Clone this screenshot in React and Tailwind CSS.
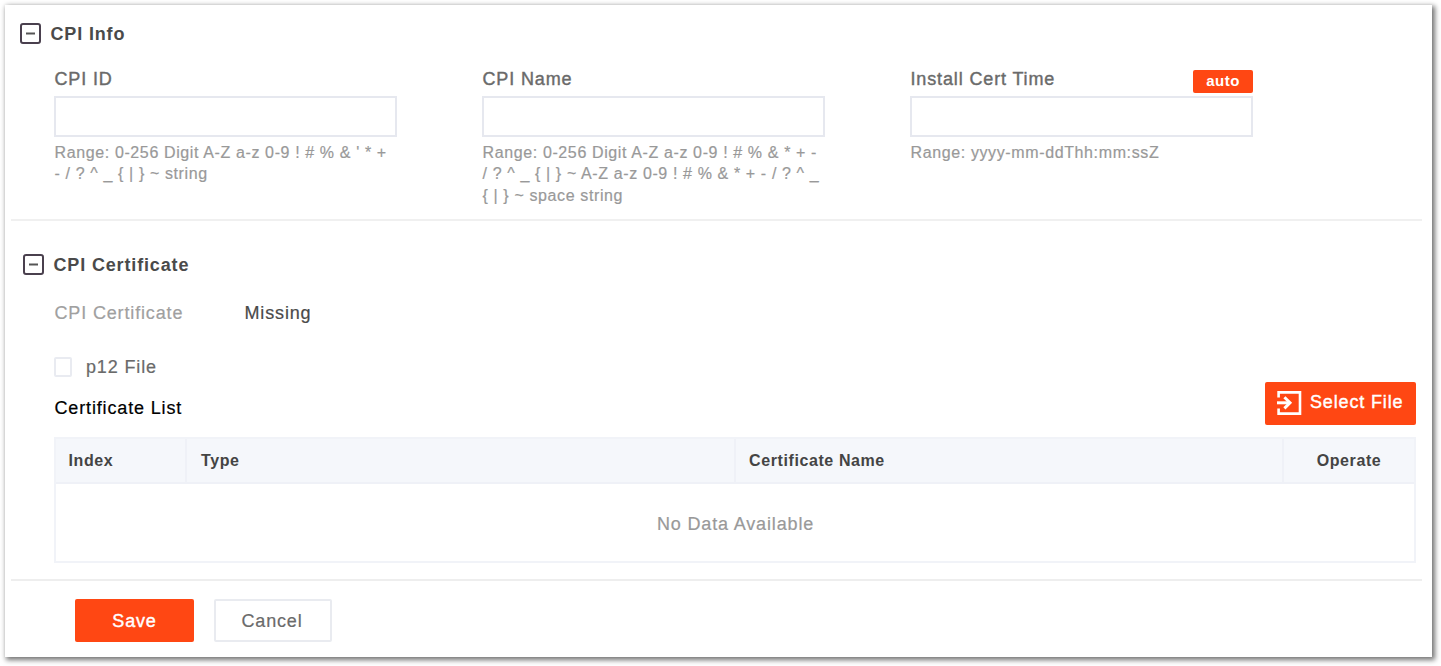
import React from "react";

function CollapseIcon() {
  return (
    <svg width="21" height="21" viewBox="0 0 21 21" fill="none" className="-mt-px">
      <rect x="1" y="1" width="19" height="19" rx="2" stroke="#4a404e" strokeWidth="2" />
      <path d="M6 10.5h9" stroke="#555" strokeWidth="2" />
    </svg>
  );
}

function ImportIcon() {
  return (
    <svg width="25" height="24" viewBox="0 0 25 24" fill="none" stroke="#fff" strokeWidth="2.6">
      <path d="M1.6 6.4V1.4H23V22.6H1.6V17.4" />
      <path d="M0 11.8H12.5" strokeWidth="3" />
      <path d="M7.4 6.2L13 11.8L7.4 17.4" strokeWidth="3" />
    </svg>
  );
}

function SectionTitle({ children }) {
  return (
    <h2 className="flex h-[22px] items-center gap-[9.5px] text-lg leading-[22px] font-bold tracking-[0.85px] text-[#4a4a4a]">
      <CollapseIcon />
      {children}
    </h2>
  );
}

function Field({ label, lines, action }) {
  return (
    <div className="w-[343px]">
      <div className="flex h-[27px] items-start justify-between">
        <label className="pt-px pl-[0.5px] text-lg leading-[18px] tracking-[0.86px] text-[#6a6a6a] [-webkit-text-stroke:0.4px_#6a6a6a]">
          {label}
        </label>
        {action}
      </div>
      <input className="block h-[41px] w-full border-2 border-[#e6e8ef] bg-white px-3 outline-none" />
      <div className="pt-[4.5px] pl-[0.5px] text-base leading-[21.5px] tracking-[0.62px] whitespace-pre text-[#999] [-webkit-text-stroke:0.2px_#999]">
        {lines.map((line) => (
          <div key={line}>{line}</div>
        ))}
      </div>
    </div>
  );
}

export default function App() {
  return (
    <div className="h-[666px] w-[1441px] overflow-hidden bg-white pt-[5px] pl-[5px] font-['Liberation_Sans',Arial,sans-serif]">
      <div className="h-[652px] w-[1427px] bg-white pl-[6px] shadow-[2px_2px_5px_1px_rgba(0,0,0,0.55)]">
        <section className="h-[216px] w-[1411px] border-b-2 border-[#f0f0f0] pt-[18px] pl-[9px]">
          <SectionTitle>CPI Info</SectionTitle>
          <div className="mt-[24px] ml-[34px] flex gap-[85px]">
            <Field
              label="CPI ID"
              lines={["Range: 0-256 Digit A-Z a-z 0-9 ! # % & ' * +", "- / ? ^ _ { | } ~ string"]}
            />
            <Field
              label="CPI Name"
              lines={[
                "Range: 0-256 Digit A-Z a-z 0-9 ! # % & * + -",
                "/ ? ^ _ { | } ~ A-Z a-z 0-9 ! # % & * + - / ? ^ _",
                "{ | } ~ space string",
              ]}
            />
            <Field
              label="Install Cert Time"
              lines={["Range: yyyy-mm-ddThh:mm:ssZ"]}
              action={
                <button className="mt-px h-[23px] w-[60px] rounded-[2px] bg-[#ff4713] pb-px text-[15px] leading-[22px] font-bold tracking-[0.5px] text-white">
                  auto
                </button>
              }
            />
          </div>
        </section>

        <section className="h-[360px] w-[1411px] border-b-2 border-[#eeeeee] pt-[33px] pl-[12px]">
          <SectionTitle>CPI Certificate</SectionTitle>
          <div className="ml-[31px] w-[1362px] text-lg leading-[22px] tracking-[0.85px]">
            <div className="mt-[26px] flex pl-[0.5px] [-webkit-text-stroke:0.2px_currentColor]">
              <span className="w-[190px] text-[#a0a0a0]">CPI Certificate</span>
              <span className="text-[#4a4a4a]">Missing</span>
            </div>
            <label className="mt-[32px] flex items-center gap-[14px] text-[#6a6a6a] [-webkit-text-stroke:0.2px_currentColor]">
              <span className="h-[20px] w-[18px] rounded-[2px] border-2 border-[#e9ebf1] bg-white" />
              p12 File
            </label>
            <div className="mt-[4px] flex h-[55px] justify-between">
              <span className="pt-[15px] pl-[0.5px] text-black [-webkit-text-stroke:0.2px_currentColor]">Certificate List</span>
              <button className="flex h-[43px] w-[151px] items-center gap-[8px] rounded-[2px] bg-[#ff4713] pb-[3px] pl-[12px] tracking-[0.85px] text-white [-webkit-text-stroke:0.4px_#fff]">
                <span className="pt-[2px]"><ImportIcon /></span>
                <span className="whitespace-nowrap">Select File</span>
              </button>
            </div>
            <div className="h-[126px] border-2 border-[#f1f3f8]">
              <div className="grid h-[45px] grid-cols-[131px_549px_548px_1fr] border-b-2 border-[#eff1f7] bg-[#f5f7fb] text-base leading-[43px] font-bold tracking-[0.6px] text-[#444]">
                <div className="border-r-2 border-[#eff1f7] pl-[12.5px]">Index</div>
                <div className="border-r-2 border-[#eff1f7] pl-[14px]">Type</div>
                <div className="border-r-2 border-[#eff1f7] pl-[13px]">Certificate Name</div>
                <div className="text-center">Operate</div>
              </div>
              <div className="flex h-[77px] items-center justify-center pt-[2px] pl-px text-[#999] [-webkit-text-stroke:0.2px_currentColor]">
                No Data Available
              </div>
            </div>
          </div>
        </section>

        <div className="flex gap-[20px] pt-[18px] pl-[64px] text-lg leading-[22px] tracking-[0.85px]">
          <button className="h-[43px] w-[119px] rounded-[2px] bg-[#ff4713] text-white [-webkit-text-stroke:0.4px_#fff]">
            Save
          </button>
          <button className="h-[43px] w-[118px] rounded-[2px] border-2 border-[#e9ebf0] bg-white pr-[2px] text-[#6a6a6a] [-webkit-text-stroke:0.2px_currentColor]">
            Cancel
          </button>
        </div>
      </div>
    </div>
  );
}
